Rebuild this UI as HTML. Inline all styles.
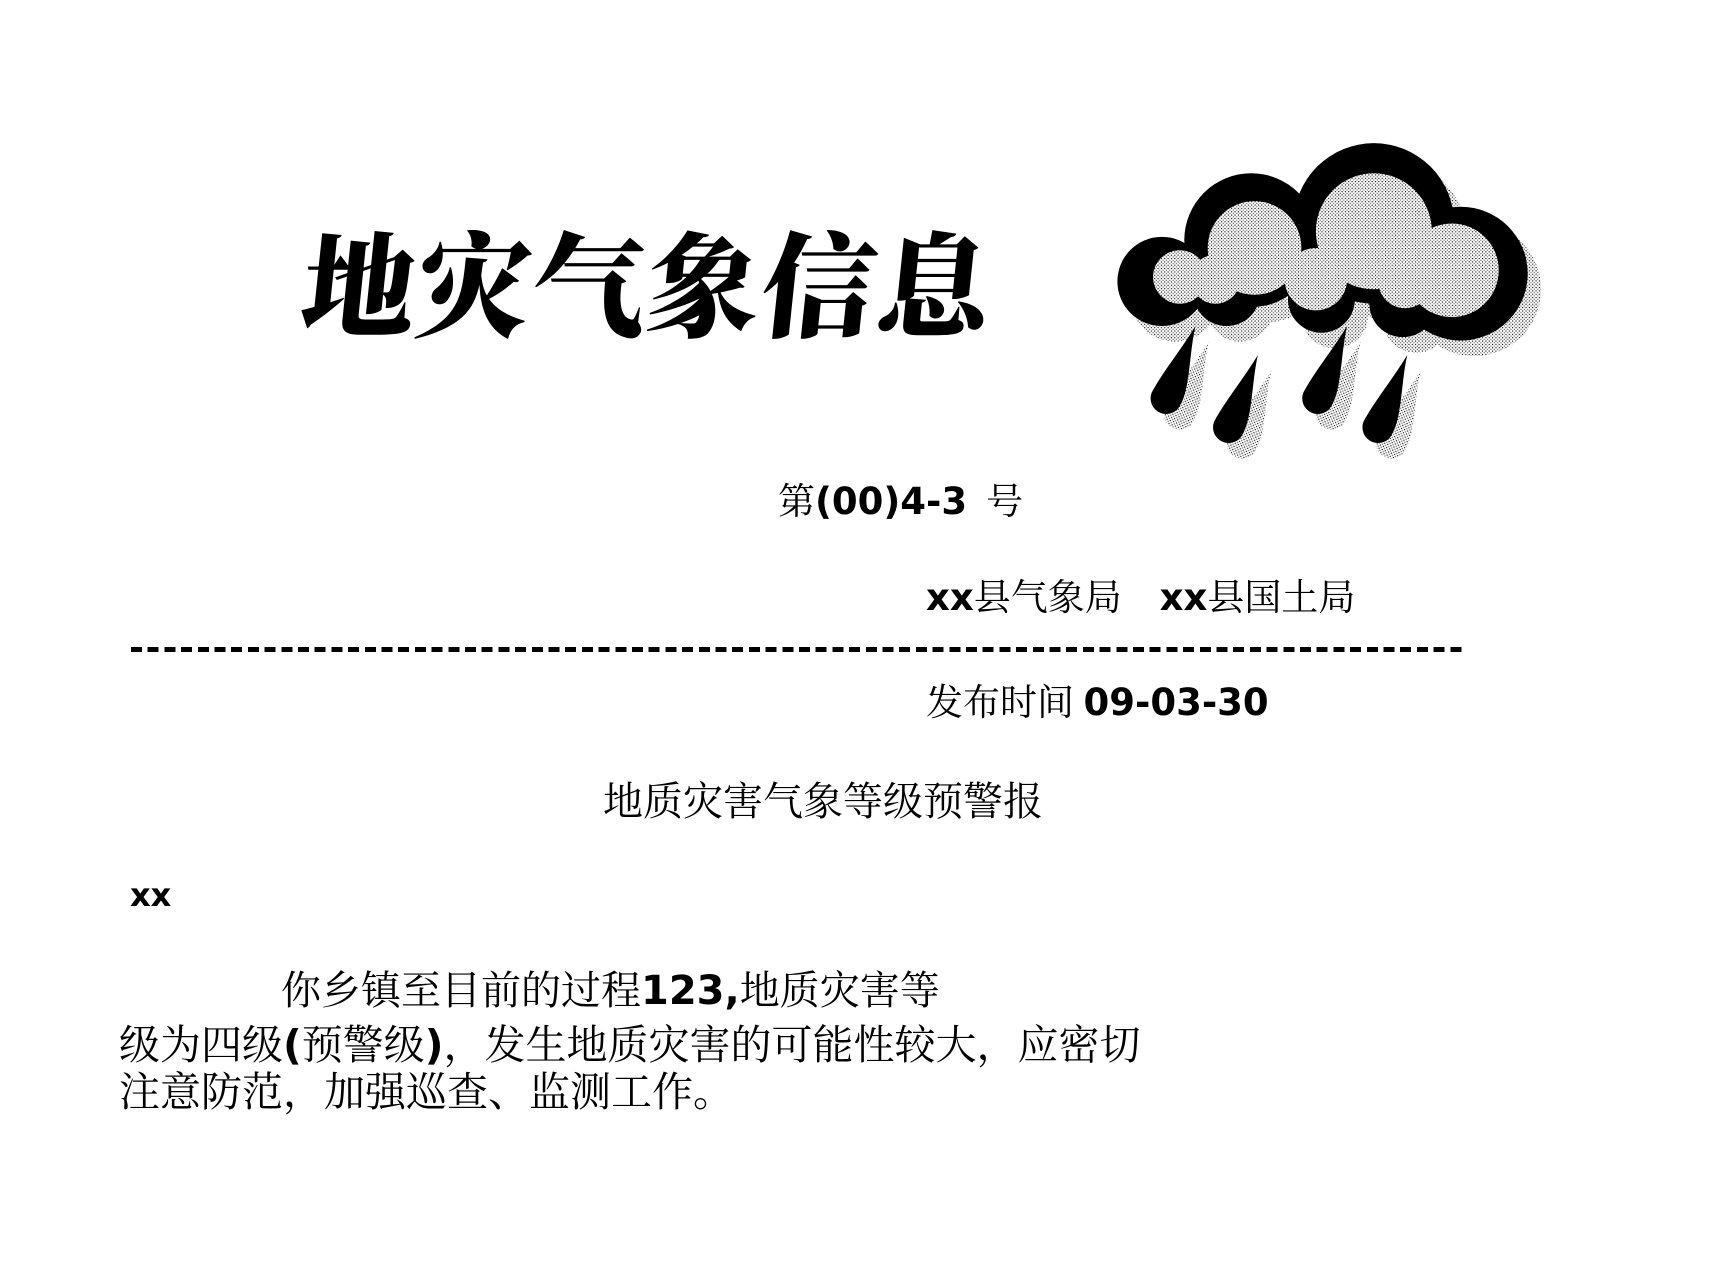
<!DOCTYPE html>
<html><head><meta charset="utf-8"><style>
html,body{margin:0;padding:0;background:#fff;}
body{width:1728px;height:1266px;position:relative;overflow:hidden;font-family:"DejaVu Sans","Noto Serif CJK SC",serif;color:#000;}
.t{position:absolute;white-space:nowrap;line-height:1;}
.c{font-family:"Noto Serif CJK SC","Noto Sans CJK SC",serif;}
b{font-family:"DejaVu Sans",sans-serif;font-weight:bold;}
</style></head><body>
<div class="t c" style="left:303px;top:222px;font-size:114px;font-weight:900;letter-spacing:1px;transform:skewX(-6deg);">地灾气象信息</div>

<svg style="position:absolute;left:1104px;top:134px" width="446" height="335" viewBox="990 120 400 300">
<defs>
<pattern id="d" width="3" height="3" patternUnits="userSpaceOnUse"><rect width="3" height="3" fill="#fff"/><rect width="1" height="1" fill="#000"/><rect x="1.5" y="1.5" width="1" height="1" fill="#555"/></pattern>
<g id="cl">
<circle cx="1042" cy="252" r="40"/><circle cx="1122" cy="215" r="60"/><circle cx="1232" cy="200" r="72"/><circle cx="1310" cy="245" r="60"/>
<circle cx="1100" cy="262" r="30"/><circle cx="1185" cy="268" r="30"/><circle cx="1258" cy="272" r="30"/>
</g>
<path id="dr" d="M0,0 C4,25 16,52 14,70 A14,14 0 0 1 -14,70 C-12,50 -4,25 0,0Z"/>
<g id="drs">
<use href="#dr" transform="translate(1072,292) rotate(22)"/><use href="#dr" transform="translate(1128,318) rotate(22)"/><use href="#dr" transform="translate(1208,292) rotate(22)"/><use href="#dr" transform="translate(1262,318) rotate(22)"/>
</g>
</defs>
<g fill="url(#d)" transform="translate(12,14)"><use href="#cl"/><use href="#drs"/></g>
<g fill="#000"><use href="#cl"/><use href="#drs"/></g>
<g fill="url(#d)">
<circle cx="1058" cy="248" r="24"/><circle cx="1125" cy="222" r="42"/><circle cx="1232" cy="207" r="52"/><circle cx="1302" cy="242" r="42"/>
<circle cx="1090" cy="250" r="22"/><circle cx="1180" cy="250" r="28"/><circle cx="1260" cy="252" r="24"/>
</g>
</svg>

<div class="t c" style="left:778px;top:480px;font-size:37px;">第<b>(00)4-3</b>&nbsp; 号</div>
<div class="t c" style="left:926px;top:576px;font-size:37px;"><b>xx</b>县气象局&nbsp;&nbsp;&nbsp; <b>xx</b>县国土局</div>
<div style="position:absolute;left:131px;top:647px;width:1334px;height:5px;background:repeating-linear-gradient(90deg,#000 0 11px,transparent 11px 16.7px);"></div>
<div class="t c" style="left:926px;top:681px;font-size:37px;">发布时间 <b>09-03-30</b></div>
<div class="t c" style="left:603px;top:779px;font-size:40px;">地质灾害气象等级预警报</div>
<div class="t" style="left:130px;top:879px;font-size:32px;font-weight:bold;">xx</div>
<div class="t c" style="left:281px;top:968px;font-size:40px;">你乡镇至目前的过程<b>123,</b>地质灾害等</div>
<div class="t c" style="left:119px;top:1021px;font-size:41px;">级为四级<b>(</b>预警级<b>)</b>，发生地质灾害的可能性较大，应密切</div>
<div class="t c" style="left:119px;top:1068px;font-size:41px;">注意防范，加强巡查、监测工作。</div>
</body></html>
